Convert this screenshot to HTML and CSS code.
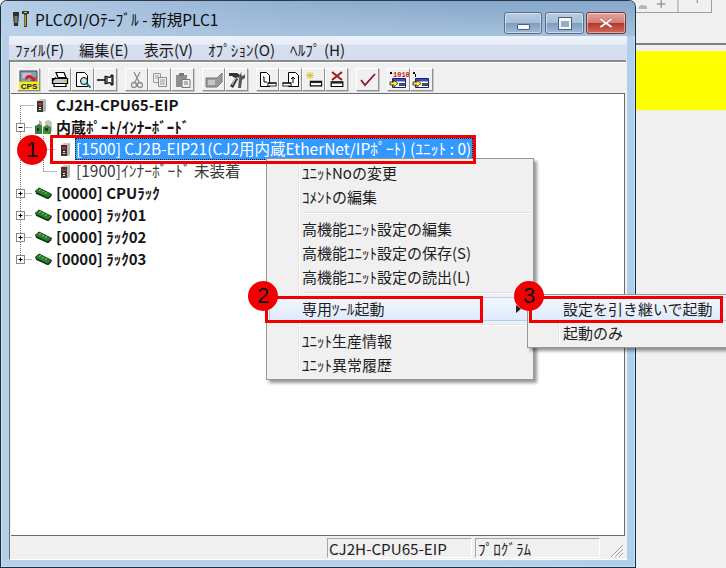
FILE: index.html
```html
<!DOCTYPE html>
<html lang="ja">
<head>
<meta charset="utf-8">
<title>PLCのI/Oﾃｰﾌﾞﾙ</title>
<link rel="stylesheet" href="styles.css">
</head>
<body>
<svg class="defs" width="0" height="0">
  <symbol id="unit" viewBox="0 0 12 15">
    <path d="M2 3l3-2h6v12l-3 1H2z" fill="#c9c9c2"/>
    <path d="M2 3h6v11H2z" fill="#3d3733"/>
    <path d="M8 3l3-2v12l-3 1z" fill="#b5b5ad"/>
    <path d="M3 5h4v2H3z" fill="#b53232"/><path d="M4 9h2v1H4zM4 11h2v1H4z" fill="#e4e4e4"/>
  </symbol>
  <symbol id="rack" viewBox="0 0 17 12">
    <path d="M0 4.500L4 1l13 6.500-4 4z" fill="#2a7f2a" stroke="#0f4415" stroke-width="1"/>
    <path d="M1 6l12 5.500 3-3" fill="none" stroke="#0d3d12" stroke-width="1.500"/>
    <path d="M4 3.500l2-1M7 5l2-1M10 6.500l2-1" stroke="#8fce8f" stroke-width="1"/>
  </symbol>
  <symbol id="plc" viewBox="0 0 12 8">
    <path d="M1 3h10v4H1z" fill="#fff" stroke="#000"/><path d="M1 3h10v1.500H1z" fill="#222"/>
  </symbol>
  <symbol id="win" viewBox="0 0 18 18">
    <path d="M3.500 7.500h13v9h-13z" fill="#fff" stroke="#1c1c7c"/><path d="M4 8h12v2.500H4z" fill="#3550c0"/>
    <path d="M1 11h4V9l4 3.500L5 16v-2H1z" fill="#ffe93b" stroke="#222" stroke-width=".8"/>
    <path d="M10 12l2 3 2-3 2 3M10 15l2-3 2 3 2-3" stroke="#111" fill="none" stroke-width=".9"/>
  </symbol>
</svg>

<div class="screen">
  <main class="window">
    <header class="titlebar">
      <svg class="app-icon" width="18" height="17" viewBox="0 0 18 17">
        <path d="M1 1h6v2l-1 12H2L1 3z" fill="#2c2c28"/><path d="M2.500 5h3v7h-3z" fill="#7b7b6f"/>
        <path d="M10 0h7v3h-2v13h-3V3h-2z" fill="#3a3a30"/><path d="M12 1h3v1h-3z" fill="#d1b84a"/><path d="M12.500 4h1.500v11h-1.500z" fill="#b89a32"/>
      </svg>
      <span class="title-text">PLCのI/Oﾃｰﾌﾞﾙ - 新規PLC1</span>
      <div class="caption">
        <button class="cap cap-min"><span class="glyph-min"></span></button>
        <button class="cap cap-max"><span class="glyph-max"></span></button>
        <button class="cap cap-close">
          <svg width="14" height="12" viewBox="0 0 14 12"><path d="M2 1l5 4 5-4 1.500 1.500L9 6l4.500 3.500L12 11 7 7.500 2 11 .5 9.500 5 6 .5 2.500z" fill="#fff" stroke="#8c5a50" stroke-width=".5"/></svg>
        </button>
      </div>
    </header>
    <nav class="menubar">
      <span>ﾌｧｲﾙ(F)</span><span>編集(E)</span><span>表示(V)</span><span>ｵﾌﾟｼｮﾝ(O)</span><span>ﾍﾙﾌﾟ (H)</span>
    </nav>
    <div class="client">
      <div class="toolbar">
        <div class="tb-group">
          <button class="tb"><svg width="20" height="20" viewBox="0 0 20 20"><path d="M1 1h17v11H1z" fill="#7fa3b5" stroke="#444"/><path d="M3 3h9v5H3z" fill="#c9b5d8"/><path d="M6 9c0-5 7-5 9-1l2-1-1 5-5-1 2-1c-1-2-5-3-5 0z" fill="#d42020"/><path d="M0 11.500h20V20H0z" fill="#f5ec1e"/><text class="cps" x="10" y="19" text-anchor="middle">CPS</text></svg></button>
        </div>
        <div class="tb-group">
          <button class="tb"><svg width="18" height="17" viewBox="0 0 18 17"><path d="M5 1.500h8l2 5H7z" fill="#fff" stroke="#000" stroke-width="1.200"/><path d="M1.500 7.500h15v5h-15z" fill="#c8c8c8" stroke="#000" stroke-width="1.200"/><path d="M1 10l4-3.500M3 12.500h12v3H3z" stroke="#000" fill="#fff" stroke-width="1.200"/><path d="M12 9h3v1.500h-3z" fill="#e0c020"/></svg></button>
          <button class="tb"><svg width="18" height="18" viewBox="0 0 18 18"><path d="M2.500 1.500h8l3 3v11h-11z" fill="#fff" stroke="#000"/><circle cx="10" cy="10" r="3.500" fill="#bfe8ef" stroke="#000"/><path d="M12.500 12.500l4 4" stroke="#167a7a" stroke-width="2"/></svg></button>
          <button class="tb"><svg width="18" height="14" viewBox="0 0 18 14"><path d="M0 7h8" stroke="#000" stroke-width="1.500"/><path d="M8 3l3 1h3V2h2v10h-2v-2h-3l-3 1z" fill="#666" stroke="#000"/><path d="M11 5h3v4h-3z" fill="#fff"/></svg></button>
        </div>
        <div class="tb-group">
          <button class="tb"><svg width="12" height="18" viewBox="0 0 12 18"><path d="M3 1l5 10M9 1L4 11" stroke="#8a8a8a" stroke-width="1.300"/><circle cx="3" cy="14" r="2.500" fill="none" stroke="#8a8a8a" stroke-width="1.300"/><circle cx="9" cy="14" r="2.500" fill="none" stroke="#8a8a8a" stroke-width="1.300"/></svg></button>
          <button class="tb"><svg width="16" height="16" viewBox="0 0 16 16"><path d="M1.500 1.500h7v9h-7z" fill="none" stroke="#9a9a9a"/><path d="M6.500 5.500h8v9h-8z" fill="#efefef" stroke="#8a8a8a"/><path d="M8 8h5M8 10h5M8 12h5M3 4h4M3 6h3" stroke="#9a9a9a"/></svg></button>
          <button class="tb"><svg width="16" height="16" viewBox="0 0 16 16"><path d="M1 3h11v12H1z" fill="#8f8f8f"/><path d="M4 1h5v3H4z" fill="#777"/><path d="M7 7.500h8v8H7z" fill="#efefef" stroke="#777"/><path d="M9 10h4M9 12h4" stroke="#777"/></svg></button>
        </div>
        <div class="tb-group">
          <button class="tb"><svg width="18" height="16" viewBox="0 0 18 16"><path d="M1 6h11l5-5v9l-5 5H1z" fill="#9a9a9a" stroke="#777"/><path d="M3 8h7v5H3z" fill="#c7c7c7"/></svg></button>
          <button class="tb"><svg width="18" height="18" viewBox="0 0 18 18"><path d="M1 2h8l3 2-1 3-2-1-2 1-3-2H1z" fill="#333"/><path d="M8 6l2 2-5 9-3-2z" fill="#333"/><path d="M12 3l2-2-1 3 2 1 2-2v4l-3 2-1 8h-3l1-9z" fill="#555"/><path d="M4 14l4-7" stroke="#ddd"/></svg></button>
        </div>
        <div class="tb-group">
          <button class="tb"><svg width="18" height="18" viewBox="0 0 18 18"><path d="M1.500 1.500h6l3 3v11h-9z" fill="#fff" stroke="#000"/><path d="M4 6h1v5h3" fill="none" stroke="#000"/><use href="#plc" x="8" y="9" width="10" height="7"/></svg></button>
          <button class="tb"><svg width="18" height="18" viewBox="0 0 18 18"><path d="M6.500 1.500h7l3 3v11h-10z" fill="#fff" stroke="#000"/><path d="M11 12V6M9 8l2-2 2 2" fill="none" stroke="#000"/><use href="#plc" x="0" y="9" width="10" height="7"/></svg></button>
          <button class="tb"><svg width="18" height="18" viewBox="0 0 18 18"><path d="M5 1v7M1 4.500h8M2 2l6 5M8 2L2 7" stroke="#d8c020"/><use href="#plc" x="4" y="7" width="14" height="9"/></svg></button>
          <button class="tb"><svg width="16" height="18" viewBox="0 0 16 18"><path d="M3 1l10 8M13 1L3 9" stroke="#a01818" stroke-width="2"/><use href="#plc" x="1" y="7" width="14" height="10"/></svg></button>
        </div>
        <div class="tb-group">
          <button class="tb"><svg width="16" height="14" viewBox="0 0 16 14"><path d="M1 7l4 5L15 1" fill="none" stroke="#8e1a28" stroke-width="1.800"/></svg></button>
        </div>
        <div class="tb-group">
          <button class="tb tb-num"><svg width="19" height="18" viewBox="0 0 19 18"><path d="M1 1h2v2H1z"/><text class="bits" x="4" y="6">1010</text><use href="#win" x="0" y="0" width="18" height="18"/></svg></button>
          <button class="tb tb-num"><svg width="19" height="18" viewBox="0 0 19 18"><path d="M1 1h2v2H1zM3 3h1v3H3z"/><use href="#win" x="0" y="0" width="18" height="18"/></svg></button>
        </div>
      </div>

      <div class="tree">
        <svg class="tree-lines" width="80" height="180" viewBox="0 0 80 180">
          <g class="dots">
            <path d="M9.500 12v154.500"/><path d="M9.500 11.500h14M9.500 33.500h12M9.500 99.500h12M9.500 121.500h12M9.500 143.500h12M9.500 165.500h12"/>
            <path d="M32.500 42v35M32.500 55.500h12M32.500 77.500h13"/>
          </g>
          <g class="boxes">
            <rect x="5.500" y="29.500" width="8" height="8"/><path d="M7.500 33.500h4"/>
            <rect x="5.500" y="95.500" width="8" height="8"/><path d="M7.500 99.500h4M9.500 97.500v4"/>
            <rect x="5.500" y="117.500" width="8" height="8"/><path d="M7.500 121.500h4M9.500 119.500v4"/>
            <rect x="5.500" y="139.500" width="8" height="8"/><path d="M7.500 143.500h4M9.500 141.500v4"/>
            <rect x="5.500" y="161.500" width="8" height="8"/><path d="M7.500 165.500h4M9.500 163.500v4"/>
          </g>
        </svg>
        <div class="row bold lvl0"><svg class="ico-unit" width="12" height="15"><use href="#unit"/></svg><span>CJ2H-CPU65-EIP</span></div>
        <div class="row bold lvl0 lvl0-port">
          <svg class="ico-port" width="20" height="16" viewBox="0 0 20 16"><path d="M5 1l3 2v9H4z" fill="#b5b5ad"/><path d="M1 7l4-2 3 2v8H1z" fill="#3b7a3b"/><path d="M11 2l4-1 3 2v10h-7z" fill="#c4c4bc"/><path d="M9 8l4-2 4 2v7H9z" fill="#3f8f3f"/><path d="M3 9h2v3H3zM11 9h3v3h-3z" fill="#143f14"/></svg>
          <span>内蔵ﾎﾟｰﾄ/ｲﾝﾅｰﾎﾞｰﾄﾞ</span>
        </div>
        <div class="row lvl1"><svg class="ico-unit-sm" width="12" height="15"><use href="#unit"/></svg><span class="selected">[1500] CJ2B-EIP21(CJ2用内蔵EtherNet/IPﾎﾟｰﾄ) (ﾕﾆｯﾄ : 0)</span></div>
        <div class="row lvl1"><svg class="ico-unit-sm" width="12" height="15"><use href="#unit"/></svg><span class="plain">[1900]ｲﾝﾅｰﾎﾞｰﾄﾞ 未装着</span></div>
        <div class="row bold lvl0 rack-row"><svg class="ico-rack" width="17" height="12"><use href="#rack"/></svg><span>[0000] CPUﾗｯｸ</span></div>
        <div class="row bold lvl0 rack-row"><svg class="ico-rack" width="17" height="12"><use href="#rack"/></svg><span>[0000] ﾗｯｸ01</span></div>
        <div class="row bold lvl0 rack-row"><svg class="ico-rack" width="17" height="12"><use href="#rack"/></svg><span>[0000] ﾗｯｸ02</span></div>
        <div class="row bold lvl0 rack-row"><svg class="ico-rack" width="17" height="12"><use href="#rack"/></svg><span>[0000] ﾗｯｸ03</span></div>
      </div>

      <footer class="statusbar">
        <span class="pane pane-model">CJ2H-CPU65-EIP</span>
        <span class="pane pane-mode">ﾌﾟﾛｸﾞﾗﾑ</span>
        <svg class="grip" width="14" height="14" viewBox="0 0 14 14"><path d="M13 1L1 13M13 5l-8 8M13 9l-4 4" stroke="#9a9a9a" fill="none"/><path d="M13.500 2L2 13.500M13.500 6L6 13.500M13.500 10L10 13.500" stroke="#fff" fill="none"/></svg>
      </footer>
    </div>
  </main>

  <aside class="side">
    <div class="side-strip">
      <svg class="side-glyphs" width="76" height="12" viewBox="0 0 76 12"><path d="M4 9V6h6v3M7 6v3M3 8h8" stroke="#999" fill="none"/><path d="M21 4h9M25.500 0v8" stroke="#777" fill="none"/><path d="M42.500 0v12" stroke="#999"/><path d="M62 0v3" stroke="#888"/></svg>
    </div>
    <div class="side-rule"></div>
    <div class="side-yellow"></div>
  </aside>

  <div class="menu ctx">
    <div class="item">ﾕﾆｯﾄNoの変更</div>
    <div class="item">ｺﾒﾝﾄの編集</div>
    <div class="sep"></div>
    <div class="item">高機能ﾕﾆｯﾄ設定の編集</div>
    <div class="item">高機能ﾕﾆｯﾄ設定の保存(S)</div>
    <div class="item">高機能ﾕﾆｯﾄ設定の読出(L)</div>
    <div class="sep"></div>
    <div class="item hot">専用ﾂｰﾙ起動<span class="arrow"></span></div>
    <div class="sep"></div>
    <div class="item">ﾕﾆｯﾄ生産情報</div>
    <div class="item">ﾕﾆｯﾄ異常履歴</div>
  </div>
  <div class="menu sub">
    <div class="item hot">設定を引き継いで起動</div>
    <div class="item">起動のみ</div>
  </div>

  <div class="redbox rb1"></div>
  <div class="redbox rb2"></div>
  <div class="redbox rb3"></div>
  <div class="badge b1">1</div>
  <div class="badge b2">2</div>
  <div class="badge b3">3</div>
</div>
</body>
</html>
```

FILE: styles.css
```css
* { box-sizing: border-box; }
html, body { margin: 0; padding: 0; }
body { font-family: "Noto Sans CJK JP", "Noto Sans", sans-serif; font-size: 15px; color: #111; background: #f0f0f0; overflow: hidden; }
.defs { position: absolute; }
.screen { position: relative; display: flex; width: 726px; height: 568px; overflow: hidden; }

/* window frame */
.window {
  width: 636px; height: 568px; display: flex; flex-direction: column;
  border: 1px solid #15303f; border-top-color: #2a3a48; border-radius: 7px 7px 0 0;
  background: linear-gradient(90deg, #b6d0ea 0, #b6d0ea 60%, #b0cfec 100%);
  padding: 0 8px 7px 8px;
  box-shadow: inset 0 0 0 1px rgba(255,255,255,.3);
}
.titlebar {
  display: flex; align-items: center; height: 35px; margin: 0 -8px; padding: 0 9px 0 11px;
  border-radius: 6px 6px 0 0;
  background: linear-gradient(90deg, rgba(190,212,236,.85) 0, rgba(170,196,224,.4) 40%, rgba(140,172,208,0) 75%), linear-gradient(180deg, #85a7ca 0, #a6c1dc 100%);
}
.app-icon { flex: none; margin-top: 1px; }
.title-text { margin-left: 5px; font-size: 15.5px; color: #0c0c0c; white-space: nowrap; flex: 1; }
.caption { display: flex; gap: 3px; align-self: flex-start; margin-top: 11px; }
.cap {
  height: 22px; padding: 0; display: flex; align-items: center; justify-content: center;
  border: 1px solid #54708e; border-radius: 3px; box-shadow: inset 0 0 0 1px rgba(255,255,255,.45);
  background: linear-gradient(180deg, #b7cce3 0, #a7bfd9 48%, #7f9dbd 52%, #a0bbd7 100%);
}
.cap-min { width: 38px; }
.cap-max { width: 39px; margin-right: -1px; }
.cap-close { width: 40px; border-color: #6d3a38; background: linear-gradient(180deg, #e5a79f 0, #d47e75 48%, #b8362a 52%, #cf6a5e 100%); }
.glyph-min { display: block; width: 13px; height: 6px; margin-top: 7px; background: #f6f8fb; border: 1px solid #4a5f78; border-radius: 1px; }
.glyph-max { display: block; width: 12px; height: 11px; background: #96acc5; border: 2px solid #f5f7fa; outline: 1px solid #4a5f78; border-top-width: 3px; }

.menubar {
  display: flex; align-items: center; height: 24px; padding: 2px 0 0 6px; font-size: 15.2px; color: #1a1a1a;
  background: linear-gradient(180deg, #eef3fa 0, #e6edf7 35%, #d8e0f0 38%, #d5ddee 100%);
}
.menubar span { margin-right: 15px; white-space: nowrap; }

.client { flex: 1; min-height: 0; display: flex; flex-direction: column; background: #f0f0f0; border-left: 1px solid #6d6d6d; border-bottom: 1px solid #fff; }

.toolbar { display: flex; gap: 8px; height: 33px; padding: 6px 0 0 7px; background: #f0f0f0; border-top: 2px solid #8c8c8c; box-shadow: inset 0 1px 0 #fff; flex: none; margin-right: 1px; }
.tb-group { display: flex; }
.tb { width: 23px; height: 23px; padding: 0; display: flex; align-items: center; justify-content: center; background: #f0f0f0; border: 1px solid; border-color: #fff #8f8f8f #8f8f8f #fff; box-shadow: 1px 1px 0 #c8c8c8; }
.cps { font: 700 8px "Liberation Sans", sans-serif; fill: #111a66; }
.bits { font: 700 7px "Liberation Mono", monospace; fill: #c01818; }
.tb-num svg { overflow: visible; }

.tree { position: relative; flex: 1; min-height: 0; margin: 0 2px 0 1px; background: #fff; border: 1px solid #6b6b6b; border-width: 1px 1px 1px 0; }
.tree-lines { position: absolute; left: 0; top: 0; }
.dots path { fill: none; stroke: #777; stroke-dasharray: 1 1; }
.boxes rect { fill: #fff; stroke: #8a8a8a; }
.boxes path { fill: none; stroke: #000; }
.row { position: relative; display: flex; align-items: center; height: 22px; white-space: nowrap; }
.row.bold { font-weight: 700; font-size: 15px; color: #161616; }
.row.bold span, .plain { margin-bottom: 2px; }
.lvl0 { padding-left: 24px; }
.lvl1 { padding-left: 48px; color: #333; }
.ico-unit { margin-right: 9px; }
.ico-port { margin: 0 2px 0 -1px; }
.ico-rack { margin-right: 4px; }
.ico-unit-sm { margin-right: 4px; }
.selected { height: 22px; line-height: 20px; background: #3399ff; color: #fff; padding: 0 2px 0 1px; outline: 1px dotted #222; outline-offset: -1px; font-size: 15.5px; }
.plain { font-size: 15.5px; color: #3a3a3a; margin-left: 1px; }

.statusbar { flex: none; display: flex; align-items: center; height: 23px; padding: 2px 3px 1px 317px; font-size: 15.2px; color: #222; background: #f0f0f0; }
.pane { height: 20px; line-height: 19px; border: 1px solid; border-color: #a5a5a5 #fff #fff #a5a5a5; padding-left: 1px; white-space: nowrap; overflow: hidden; }
.pane-model { width: 145px; margin-right: 3px; }
.pane-mode { width: 125px; padding-left: 2px; }
.grip { margin-left: auto; align-self: flex-end; }

/* side */
.side { flex: 1; min-width: 0; display: flex; flex-direction: column; background: #f0f0f0; }
.side-strip { height: 43px; }
.side-glyphs { display: block; border-bottom: 1px solid #a0a0a0; border-right: 1px solid #a0a0a0; height: 13px; }
.side-rule { height: 2px; background: #808080; flex: none; }
.side-yellow { height: 59px; margin-top: 6px; background: #ffff00; }

/* menus */
.menu { position: absolute; background: #f0f0f0; border: 1px solid #979797; box-shadow: 3px 3px 3px rgba(0,0,0,.4); padding: 2px; font-size: 15px; color: #1d1d1d; }
.menu::before { content: ""; position: absolute; top: 2px; bottom: 2px; width: 2px; background: linear-gradient(90deg, #e2e3e3 50%, #fff 50%); }
.ctx { left: 266px; top: 158px; width: 268px; height: 222px; }
.ctx::before { left: 31px; }
.sub { left: 527px; top: 294px; width: 215px; height: 54px; }
.sub::before { left: 30px; }
.item { position: relative; height: 24px; line-height: 24px; white-space: nowrap; padding-left: 33px; }
.sub .item { padding-left: 33px; }
.hot { background: linear-gradient(180deg, #f2f7fd 0, #dfeafb 100%); border: 1px solid #aecff7; border-radius: 2px; line-height: 22px; padding-left: 32px; }
.sub .hot { padding-left: 32px; }
.sep { height: 8px; margin-left: 31px; position: relative; }
.sep::after { content: ""; position: absolute; left: 2px; right: 0; top: 3px; height: 2px; background: linear-gradient(180deg, #e2e3e3 50%, #fff 50%); }
.arrow { position: absolute; right: 9px; top: 7px; width: 0; height: 0; border: 4px solid transparent; border-left: 5px solid #222; border-right: 0; }

/* annotations */
.redbox { position: absolute; border: 3px solid #f00000; }
.rb1 { left: 50px; top: 135px; width: 426px; height: 29px; }
.rb2 { left: 265px; top: 296px; width: 218px; height: 27px; }
.rb3 { left: 529px; top: 296px; width: 194px; height: 27px; }
.badge { position: absolute; width: 30px; height: 30px; border-radius: 50%; background: #f00000; color: #111; font: 400 22px/30px "Liberation Sans", sans-serif; text-align: center; }
.b1 { left: 17px; top: 135px; }
.b2 { left: 248px; top: 281px; }
.b3 { left: 514px; top: 281px; }
```
